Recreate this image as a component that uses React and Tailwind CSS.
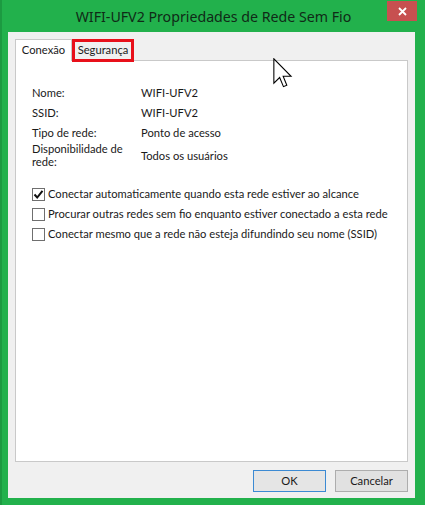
function Checkbox({ checked }) {
  return (
    <span className="w-[13px] h-[13px] border border-[#6f6f6f] bg-white flex items-center justify-center shrink-0">
      {checked && (
        <svg width="11" height="11" viewBox="0 0 11 11">
          <path d="M1.5 5.5 L4.2 8.5 L9.5 1.8" fill="none" stroke="#111" strokeWidth="2" />
        </svg>
      )}
    </span>
  );
}

function App() {
  const info = [
    ["Nome:", "WIFI-UFV2"],
    ["SSID:", "WIFI-UFV2"],
    ["Tipo de rede:", "Ponto de acesso"],
  ];
  const options = [
    [true, "Conectar automaticamente quando esta rede estiver ao alcance"],
    [false, "Procurar outras redes sem fio enquanto estiver conectado a esta rede"],
    [false, "Conectar mesmo que a rede não esteja difundindo seu nome (SSID)"],
  ];

  return (
    <div
      className="relative w-[425px] h-[505px] bg-[#22b14c] flex flex-col border-l-2 border-[#1c9a41] text-[#1a1a1a] overflow-hidden"
      style={{ fontFamily: 'Lato, "Noto Sans", sans-serif' }}
    >
      {/* title bar */}
      <div
        className="relative h-[32px] flex items-center justify-center shrink-0"
        style={{ fontFamily: '"Noto Sans", sans-serif' }}
      >
        <span className="text-[14.2px] text-[#102a17] pt-[1px]">
          WIFI-UFV2 Propriedades de Rede Sem Fio
        </span>
        <div className="absolute right-[8px] top-[1px] w-[30px] h-[20px] bg-[#c75050] flex items-center justify-center">
          <svg width="9" height="9" viewBox="0 0 9 9">
            <path d="M1 1 L8 8 M8 1 L1 8" stroke="#fff" strokeWidth="1.8" />
          </svg>
        </div>
      </div>

      {/* dialog body */}
      <div className="ml-[6px] mr-[10px] mb-[7px] flex-1 bg-[#f0f0f0] flex flex-col px-[7px] pt-[7px] text-[11.2px]">
        {/* tabs */}
        <div className="flex h-[21px] items-end relative z-10">
          <div className="w-[57px] bg-white border border-b-0 border-[#c9c9c9] flex items-center justify-center -mb-[1px] h-[22px]">
            Conexão
          </div>
          <div className="h-[23px] w-[62px] border-[3px] border-[#e8101a] bg-[#f0f0f0] flex items-center justify-center -mb-[2px]">
            Segurança
          </div>
        </div>

        {/* panel */}
        <div className="h-[402px] bg-white border border-[#c9c9c9] pl-[16px] pt-[22px]">
          {info.map(([k, v]) => (
            <div key={k} className="flex items-center h-[20px]">
              <span className="w-[109px] shrink-0">{k}</span>
              <span>{v}</span>
            </div>
          ))}
          <div className="flex items-center leading-[13px] -mt-[1px]">
            <span className="w-[109px] shrink-0">
              Disponibilidade de
              <br />
              rede:
            </span>
            <span>Todos os usuários</span>
          </div>

          <div className="mt-[16px]">
            {options.map(([c, t]) => (
              <div key={t} className="flex items-center h-[20px] gap-[3px]">
                <Checkbox checked={c} />
                <span className="whitespace-nowrap">{t}</span>
              </div>
            ))}
          </div>
        </div>

        {/* buttons */}
        <div className="flex justify-end gap-[9px] mt-[8px]">
          <button className="w-[73px] h-[22px] bg-[#e5e5e5] border border-[#3c8ad3]">
            OK
          </button>
          <button className="w-[73px] h-[22px] bg-[#e1e1e1] border border-[#adadad]">
            Cancelar
          </button>
        </div>
      </div>

      {/* mouse cursor */}
      <svg
        className="absolute left-[271px] top-[58px]"
        width="20"
        height="32"
        viewBox="0 0 13 21"
      >
        <path
          d="M0.5 0.5 L0.5 16.5 L4.3 12.8 L6.8 18.8 L9 17.9 L6.6 12 L11.8 12 Z"
          fill="#fff"
          stroke="#000"
          strokeWidth="0.7"
        />
      </svg>
    </div>
  );
}

export default App;
